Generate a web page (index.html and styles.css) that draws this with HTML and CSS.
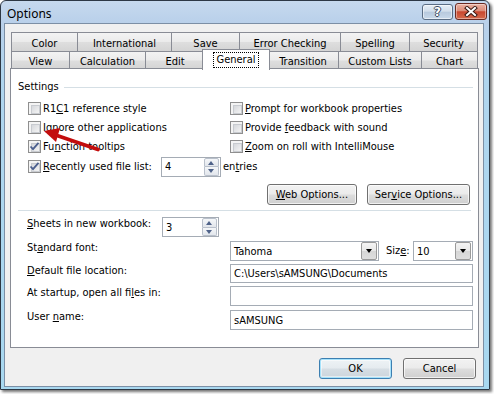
FILE: index.html
```html
<!DOCTYPE html>
<html>
<head>
<meta charset="utf-8">
<title>Options</title>
<link rel="stylesheet" href="styles.css">
</head>
<body>
<div class="window">
  <div class="titlebar">
    <span class="title">Options</span>
    <div class="caption-btns">
      <div class="cbtn help"><span>?</span></div>
      <div class="cbtn close">
        <svg width="14" height="11" viewBox="0 0 14 11">
          <path d="M3 2 L11 9 M11 2 L3 9" stroke="#3a1a14" stroke-width="4" stroke-linecap="square"/>
          <path d="M3 2 L11 9 M11 2 L3 9" stroke="#fff" stroke-width="2" stroke-linecap="square"/>
        </svg>
      </div>
    </div>
  </div>
  <div class="client">
    <div class="tabs">
      <div class="tabrow row1">
        <div class="tab">Color</div>
        <div class="tab">International</div>
        <div class="tab">Save</div>
        <div class="tab">Error Checking</div>
        <div class="tab">Spelling</div>
        <div class="tab last">Security</div>
      </div>
      <div class="tabrow row2">
        <div class="tab">View</div>
        <div class="tab">Calculation</div>
        <div class="tab">Edit</div>
        <div class="tab active"><span class="focus">General</span></div>
        <div class="tab">Transition</div>
        <div class="tab">Custom Lists</div>
        <div class="tab last">Chart</div>
      </div>
    </div>
    <div class="panel">
      <div class="group-head"><span>Settings</span><div class="hline"></div></div>
      <div class="checks">
        <label class="chk"><span class="cb"></span><span>R1<u>C</u>1 reference style</span></label>
        <label class="chk"><span class="cb"></span><span><u>P</u>rompt for workbook properties</span></label>
        <label class="chk"><span class="cb"></span><span>I<u>g</u>nore other applications</span></label>
        <label class="chk"><span class="cb"></span><span>Provide <u>f</u>eedback with sound</span></label>
        <label class="chk"><span class="cb checked"><svg width="11" height="11" viewBox="0 0 11 11"><path d="M1.5 5.5 L4 8.2 L9.5 1.8" fill="none" stroke="#4b5f8e" stroke-width="1.8"/></svg></span><span>Fu<u>n</u>ction tooltips</span></label>
        <label class="chk"><span class="cb"></span><span><u>Z</u>oom on roll with IntelliMouse</span></label>
        <div class="recent">
          <label class="chk recent-chk"><span class="cb checked"><svg width="11" height="11" viewBox="0 0 11 11"><path d="M1.5 5.5 L4 8.2 L9.5 1.8" fill="none" stroke="#4b5f8e" stroke-width="1.8"/></svg></span><span><u>R</u>ecently used file list:</span></label>
          <div class="spin recent-spin"><span class="val">4</span><span class="spinbtns"><span class="sb up"></span><span class="sb down"></span></span></div>
          <span class="entries">en<u>t</u>ries</span>
        </div>
      </div>
      <div class="btnrow">
        <button class="btn web"><u>W</u>eb Options...</button>
        <button class="btn service">Ser<u>v</u>ice Options...</button>
      </div>
      <div class="sep"></div>
      <div class="fields">
        <div class="frow sheets">
          <span class="flabel"><u>S</u>heets in new workbook:</span>
          <div class="spin sheets-spin"><span class="val">3</span><span class="spinbtns"><span class="sb up"></span><span class="sb down"></span></span></div>
        </div>
        <div class="frow">
          <span class="flabel">St<u>a</u>ndard font:</span>
          <div class="combo font-combo"><span class="val">Tahoma</span><span class="ddbtn"></span></div>
          <span class="sizelabel">Siz<u>e</u>:</span>
          <div class="combo size-combo"><span class="val">10</span><span class="ddbtn"></span></div>
        </div>
        <div class="frow">
          <span class="flabel"><u>D</u>efault file location:</span>
          <div class="textbox short"><span class="val">C:\Users\sAMSUNG\Documents</span></div>
        </div>
        <div class="frow">
          <span class="flabel">At startup, open all fi<u>l</u>es in:</span>
          <div class="textbox"></div>
        </div>
        <div class="frow">
          <span class="flabel">User <u>n</u>ame:</span>
          <div class="textbox"><span class="val">sAMSUNG</span></div>
        </div>
      </div>
    </div>
    <div class="footer">
      <button class="btn dlg default">OK</button>
      <button class="btn dlg">Cancel</button>
    </div>
  </div>
  <svg class="arrow" width="120" height="60" viewBox="0 0 120 60">
    <line x1="98" y1="149.5" x2="57" y2="135.5" stroke="#c30d0d" stroke-width="3.8" stroke-linecap="round" transform="translate(-1 -101)"/>
    <polygon points="44,131 60,128 56,142" fill="#c30d0d" transform="translate(-1 -101)"/>
  </svg>
</div>
</body>
</html>
```
FILE: styles.css
```css
* { box-sizing: border-box; }
html, body { margin: 0; padding: 0; }
body {
  width: 494px;
  height: 394px;
  background: #ffffff;
  font-family: "DejaVu Sans Condensed", "DejaVu Sans", sans-serif;
  font-size: 11px;
  color: #000;
  overflow: hidden;
}
u { text-decoration: underline; text-underline-offset: 1px; }

.window {
  position: relative;
  width: 490px;
  height: 390px;
  border: 1px solid #2d3845;
  border-radius: 6px 6px 0 0;
  background: linear-gradient(to bottom, #c6d9ee 0, #b9d0ea 22px, #b0d5ee 70px, #a8d8f0 100%);
  box-shadow: 2px 2px 3px rgba(0, 0, 0, 0.55);
  display: flex;
  flex-direction: column;
}

.titlebar {
  height: 22px;
  display: flex;
  align-items: flex-start;
  padding-left: 6px;
}
.title {
  font-family: "Noto Sans", "Open Sans", sans-serif;
  font-size: 12px;
  line-height: 16px;
  margin-top: 5px;
  color: #000;
}
.caption-btns {
  margin-left: auto;
  margin-right: 2px;
  display: flex;
  align-items: flex-start;
  gap: 2px;
}
.cbtn {
  border-radius: 3px;
  display: flex;
  align-items: center;
  justify-content: center;
}
.help {
  width: 31px;
  height: 16px;
  margin-top: 3px;
  border: 1px solid #5a6d84;
  background: linear-gradient(to bottom, #e6eef7 0, #d2deeb 45%, #b7c9dd 50%, #c9d9ea 100%);
  box-shadow: inset 0 0 0 1px rgba(255,255,255,0.55);
}
.help span {
  font-family: "DejaVu Sans", sans-serif;
  font-weight: bold;
  font-size: 12px;
  line-height: 12px;
  color: #fff;
  text-shadow: 1px 0 0 #3c4c60, -1px 0 0 #3c4c60, 0 1px 0 #3c4c60, 0 -1px 0 #3c4c60;
}
.close {
  width: 32px;
  height: 17px;
  margin-top: 2px;
  border: 1px solid #6a2a22;
  background: linear-gradient(to bottom, #eab2a3 0, #dc8c78 45%, #c8472f 52%, #d46a4c 100%);
  box-shadow: inset 0 0 0 1px rgba(255,255,255,0.4);
}

.client {
  flex: 1;
  margin: 0 5px 2px 3px;
  border: 1px solid #7c8fa5;
  background: #f0f0f0;
  padding: 8px 4px 0 5px;
  display: flex;
  flex-direction: column;
}

/* tabs */
.tabs { margin: 0 1px; }
.tabrow { display: grid; }
.row1 { grid-template-columns: 66px 94px 68px 101px 69px 69px; height: 19px; }
.row2 { grid-template-columns: 58px 76px 59px 63px 71px 83px 57px; height: 17px; }
.tab {
  border: 1px solid #898c95;
  border-right: none;
  border-bottom: none;
  background: linear-gradient(to bottom, #f3f3f3 0, #ebebeb 48%, #dedede 52%, #d4d4d4 100%);
  text-align: center;
  line-height: 15px;
  padding-top: 3px;
  white-space: nowrap;
}
.row2 .tab { line-height: 14px; padding-top: 3px; }
.tab.last { border-right: 1px solid #898c95; }
.tab.active {
  position: relative;
  z-index: 2;
  margin: -2px -3px -1px -2px;
  background: #fff;
  border-right: 1px solid #898c95;
  padding-top: 3px;
}
.focus {
  display: inline-block;
  outline: 1px dotted #000;
  outline-offset: 0;
  padding: 0 2px;
  line-height: 14px;
}

/* panel */
.panel {
  height: 280px;
  border: 1px solid #898c95;
  background: #fff;
  display: flex;
  flex-direction: column;
}
.group-head {
  margin-top: 11px;
  height: 14px;
  padding: 0 5px 0 7px;
  display: flex;
  align-items: center;
  line-height: 14px;
}
.hline {
  flex: 1;
  height: 1px;
  background: #d5dfe5;
  margin-left: 5px;
}
.checks {
  margin-top: 5px;
  padding-left: 17px;
  display: grid;
  grid-template-columns: 202px auto;
  grid-auto-rows: 19px;
}
.chk {
  display: flex;
  align-items: center;
  gap: 2px;
  white-space: nowrap;
}
.cb {
  width: 13px;
  height: 13px;
  border: 1px solid #8f8f8f;
  background: #f4f4f4;
  padding: 2px;
  position: relative;
  flex: none;
}
.cb::before {
  content: "";
  display: block;
  width: 7px;
  height: 7px;
  border: 1px solid #c8cbd0;
  background: linear-gradient(135deg, #d6d8dc 0, #f4f4f4 100%);
}
.cb svg { position: absolute; left: 0; top: 0; }
.recent {
  grid-column: 1 / 3;
  height: 21px;
  display: flex;
  align-items: center;
}
.recent-chk { width: 133px; }
.entries { margin-left: 2px; }

.spin, .combo, .textbox {
  border: 1px solid #a5acb5;
  background: #fff;
  display: flex;
  align-items: center;
  position: relative;
}
.spin .val, .combo .val, .textbox .val { padding-left: 3px; flex: 1; white-space: nowrap; }
.recent-spin { width: 60px; height: 20px; }
.sheets-spin { width: 57px; height: 20px; }
.spinbtns {
  width: 15px;
  height: 18px;
  margin-right: 1px;
  display: flex;
  flex-direction: column;
}
.sb {
  flex: 1;
  border: 1px solid #b9c0cb;
  background: linear-gradient(to bottom, #f5f7f9, #e2e6ec);
  position: relative;
}
.sb.up { border-radius: 2px 2px 0 0; }
.sb.down { border-top: none; border-radius: 0 0 2px 2px; }
.sb::after {
  content: "";
  position: absolute;
  left: 3px;
  border-left: 3.5px solid transparent;
  border-right: 3.5px solid transparent;
}
.sb.up::after { top: 2px; border-bottom: 4px solid #4f6289; }
.sb.down::after { top: 2px; border-top: 4px solid #4f6289; }

.btnrow {
  margin-top: 9px;
  display: flex;
  padding-left: 256px;
  gap: 10px;
}
.btn {
  font-family: inherit;
  font-size: 11px;
  color: #000;
  height: 21px;
  padding: 0;
  border: 1px solid #707070;
  border-radius: 3px;
  background: linear-gradient(to bottom, #f2f2f2 0, #ebebeb 48%, #dddddd 52%, #cfcfcf 100%);
  box-shadow: inset 0 0 0 1px rgba(255,255,255,0.7);
  text-align: center;
}
.web { width: 90px; }
.service { width: 103px; }

.sep {
  margin: 5px 7px 0 7px;
  height: 1px;
  background: #d5dfe5;
}

.fields {
  margin-top: 6px;
  padding-left: 16px;
  padding-right: 5px;
  display: grid;
  grid-template-rows: 24px 23px 22px 24px 20px;
}
.frow {
  display: flex;
  align-items: flex-start;
}
.flabel {
  width: 203px;
  line-height: 14px;
  white-space: nowrap;
  flex: none;
}
.sheets .flabel { width: 135px; }
.combo, .textbox { height: 20px; }
.font-combo { width: 149px; }
.size-combo { width: 60px; margin-left: auto; }
.sizelabel { margin-left: 7px; line-height: 20px; }
.textbox { flex: 1; }
.textbox.short { height: 19px; }
.ddbtn {
  width: 16px;
  height: 18px;
  margin-right: 1px;
  border: 1px solid #9a9a9a;
  border-radius: 2px;
  background: linear-gradient(to bottom, #f4f4f4 0, #e8e8e8 50%, #d6d6d6 51%, #dedede 100%);
  position: relative;
}
.ddbtn::after {
  content: "";
  position: absolute;
  left: 3.5px;
  top: 6px;
  border-left: 3.5px solid transparent;
  border-right: 3.5px solid transparent;
  border-top: 4px solid #000;
}

.footer {
  margin-top: 10px;
  display: flex;
  justify-content: flex-end;
  padding-right: 3px;
  gap: 11px;
}
.btn.dlg { width: 73px; }
.btn.default {
  border-color: #3c7fb1;
  box-shadow: inset 0 0 0 1px #a6e2fb, inset 0 0 0 2px rgba(255,255,255,0.5);
  background: linear-gradient(to bottom, #eef3f6 0, #e5ebef 48%, #d6dee4 52%, #ccd5dc 100%);
}

.arrow {
  position: absolute;
  left: 0;
  top: 100px;
  pointer-events: none;
}
```
